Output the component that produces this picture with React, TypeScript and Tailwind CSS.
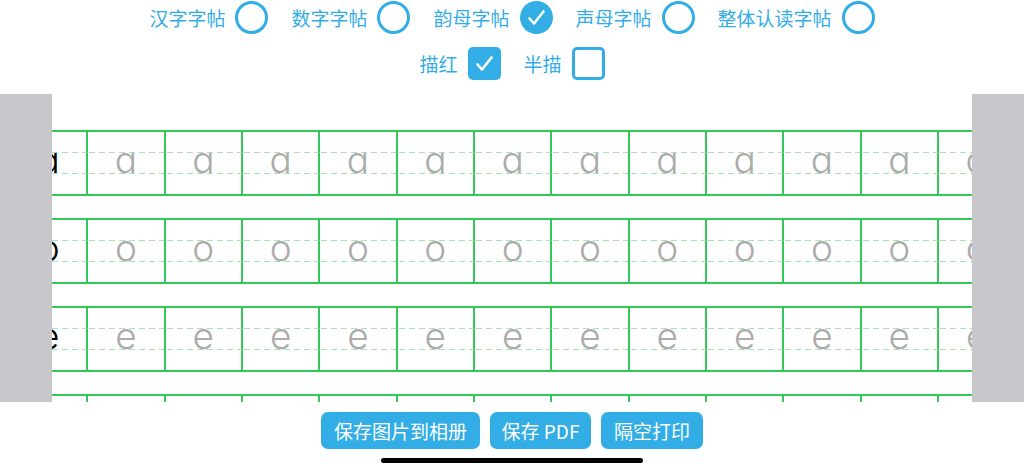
import React from "react";

function Check({ size = 33 }: { size?: number }) {
  return (
    <svg width={size} height={size} viewBox="0 0 33 33" className="absolute inset-0">
      <polyline points="9.5,17.5 14,22.5 23.5,10.5" fill="none" stroke="white" strokeWidth="2.6" strokeLinecap="round" strokeLinejoin="round" />
    </svg>
  );
}

function Radio({ label, checked }: { label: string; checked?: boolean }) {
  return (
    <div className="flex items-center gap-[10px]">
      <span className="text-[19px] leading-none text-[#32ade6]">{label}</span>
      {checked ? (
        <span className="relative block w-[33px] h-[33px] rounded-full bg-[#32ade6]">
          <Check />
        </span>
      ) : (
        <span className="block w-[33px] h-[33px] rounded-full border-[3px] border-[#32ade6]" />
      )}
    </div>
  );
}

function Box({ label, checked }: { label: string; checked?: boolean }) {
  return (
    <div className="flex items-center gap-[10px]">
      <span className="text-[19px] leading-none text-[#32ade6]">{label}</span>
      {checked ? (
        <span className="relative block w-[33px] h-[33px] rounded-[5px] bg-[#32ade6]">
          <Check />
        </span>
      ) : (
        <span className="block w-[33px] h-[33px] rounded-[5px] border-[3px] border-[#32ade6]" />
      )}
    </div>
  );
}

function Cell({ ch, first }: { ch: string; first?: boolean }) {
  return (
    <div className="relative shrink-0 w-[77.33px] h-full border-r-2 border-[#34c759] flex items-center justify-center">
      <svg className="absolute left-0 top-0" width="76" height="62">
        <line x1="1" y1="20.5" x2="76" y2="20.5" stroke="#a2e6b0" strokeWidth="1.2" strokeDasharray="6 4" />
        <line x1="1" y1="41.5" x2="76" y2="41.5" stroke="#a2e6b0" strokeWidth="1.2" strokeDasharray="6 4" />
      </svg>
      <span
        className={
          "relative top-[-4px] text-[37px] font-light leading-none " +
          (first ? "text-black" : "text-[#ababab]")
        }
        style={{ fontFamily: 'Inter, "DejaVu Sans", sans-serif' }}
      >
        {ch}
      </span>
    </div>
  );
}

function Row({ ch }: { ch: string }) {
  const cells = Array.from({ length: 13 });
  return (
    <div className="flex h-[66px] border-y-2 border-[#34c759] shrink-0">
      {cells.map((_, i) => (
        <Cell key={i} ch={ch} first={i === 0} />
      ))}
    </div>
  );
}

export default function App() {
  return (
    <div
      className="w-[1024px] h-[473px] bg-white overflow-hidden flex flex-col"
      style={{ fontFamily: '"Noto Sans CJK SC", "Noto Sans", sans-serif' }}
    >
      <div className="h-[94px] flex flex-col items-center pt-[1px] gap-[13px]">
        <div className="flex items-center gap-[23px] h-[33px]">
          <Radio label="汉字字帖" />
          <Radio label="数字字帖" />
          <Radio label="韵母字帖" checked />
          <Radio label="声母字帖" />
          <Radio label="整体认读字帖" />
        </div>
        <div className="flex items-center gap-[23px] h-[33px]">
          <Box label="描红" checked />
          <Box label="半描" />
        </div>
      </div>
      <div className="flex h-[308px]">
        <div className="w-[52px] shrink-0 bg-[#c7c7cc]" />
        <div className="flex-1 overflow-hidden">
          <div className="ml-[-41px] pt-[36px] flex flex-col gap-[22px]">
            <Row ch="ɑ" />
            <Row ch="o" />
            <Row ch="e" />
            <Row ch="i" />
          </div>
        </div>
        <div className="w-[52px] shrink-0 bg-[#c7c7cc]" />
      </div>
      <div className="flex justify-center gap-[10px] pt-[10px]">
        <button className="h-[37px] px-[13px] rounded-[7px] bg-[#32ade6] text-white text-[19px] leading-none">保存图片到相册</button>
        <button className="h-[37px] w-[101px] rounded-[7px] bg-[#32ade6] text-white text-[19px] leading-none">保存 PDF</button>
        <button className="h-[37px] px-[13px] rounded-[7px] bg-[#32ade6] text-white text-[19px] leading-none">隔空打印</button>
      </div>
      <div className="flex justify-center pt-[9px]">
        <div className="w-[262px] h-[5px] rounded-full bg-black" />
      </div>
    </div>
  );
}
